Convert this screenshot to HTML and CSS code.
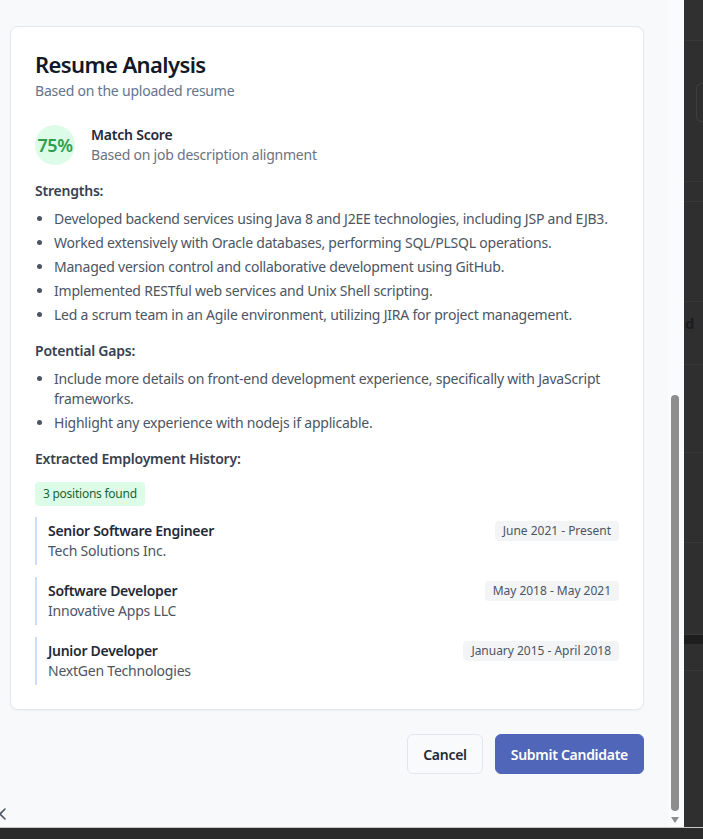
FILE: index.html
```html
<!DOCTYPE html>
<html lang="en">
<head>
<meta charset="utf-8">
<title>Resume Analysis</title>
<link rel="stylesheet" href="styles.css">
</head>
<body>
<div class="screen">
  <div class="panel">
    <div class="scroll">
      <div class="card">
        <div class="card-header">
          <h1 class="title">Resume Analysis</h1>
          <p class="subtitle">Based on the uploaded resume</p>
        </div>
        <div class="card-content">
          <div class="score-row">
            <div class="score-circle">75%</div>
            <div class="score-text">
              <div class="score-title">Match Score</div>
              <div class="score-sub">Based on job description alignment</div>
            </div>
          </div>

          <h3 class="section-label">Strengths:</h3>
          <ul class="list">
            <li>Developed backend services using Java 8 and J2EE technologies, including JSP and EJB3.</li>
            <li>Worked extensively with Oracle databases, performing SQL/PLSQL operations.</li>
            <li>Managed version control and collaborative development using GitHub.</li>
            <li>Implemented RESTful web services and Unix Shell scripting.</li>
            <li>Led a scrum team in an Agile environment, utilizing JIRA for project management.</li>
          </ul>

          <h3 class="section-label">Potential Gaps:</h3>
          <ul class="list">
            <li>Include more details on front-end development experience, specifically with JavaScript frameworks.</li>
            <li>Highlight any experience with nodejs if applicable.</li>
          </ul>

          <h3 class="section-label">Extracted Employment History:</h3>
          <div class="badge-row"><span class="badge">3 positions found</span></div>
          <div class="jobs">
            <div class="job">
              <div class="job-info">
                <div class="job-title">Senior Software Engineer</div>
                <div class="job-company">Tech Solutions Inc.</div>
              </div>
              <span class="job-date">June 2021 - Present</span>
            </div>
            <div class="job">
              <div class="job-info">
                <div class="job-title">Software Developer</div>
                <div class="job-company">Innovative Apps LLC</div>
              </div>
              <span class="job-date">May 2018 - May 2021</span>
            </div>
            <div class="job">
              <div class="job-info">
                <div class="job-title">Junior Developer</div>
                <div class="job-company">NextGen Technologies</div>
              </div>
              <span class="job-date">January 2015 - April 2018</span>
            </div>
          </div>
        </div>
      </div>

      <div class="actions">
        <button class="btn btn-outline">Cancel</button>
        <button class="btn btn-primary">Submit Candidate</button>
      </div>

      <div class="close-row">
        <svg class="close-icon" width="14" height="14" viewBox="0 0 14 14" aria-hidden="true">
          <path d="M2 2 L12 12 M12 2 L2 12" stroke="#4b5563" stroke-width="1.6" stroke-linecap="round" fill="none"/>
        </svg>
      </div>
    </div>
    <div class="scrollbar">
      <div class="thumb"></div>
      <div class="arrow"></div>
    </div>
  </div>
  <div class="backdrop">
    <div class="bd-row bd-top"></div>
    <div class="bd-row bd-input"><div class="bd-field"></div></div>
    <div class="bd-row bd-a"></div>
    <div class="bd-row bd-b"></div>
    <div class="bd-row bd-c"><span class="bd-letter">d</span></div>
    <div class="bd-row bd-d"></div>
    <div class="bd-row bd-e"></div>
    <div class="bd-row bd-g"></div>
    <div class="bd-row bd-band"></div>
    <div class="bd-row bd-f"></div>
  </div>
</div>
<div class="bottom-bar"></div>
</body>
</html>
```

FILE: styles.css
```css
* { box-sizing: border-box; }

html, body {
  margin: 0;
  padding: 0;
  background: #2b2b2b;
  overflow: hidden;
}

body {
  font-family: "Noto Sans", "Open Sans", "Liberation Sans", sans-serif;
  letter-spacing: -0.22px;
  width: 703px;
  height: 839px;
}

.screen {
  display: flex;
  height: 828px;
  border-bottom: 1px solid #c6c6c6;
}

.panel {
  width: 684px;
  flex: none;
  display: flex;
  background: #f8f9fb;
  overflow: hidden;
}

.scroll {
  width: 668px;
  padding-top: 26px;
}

.card {
  margin-left: 10px;
  width: 634px;
  background: #ffffff;
  border: 1px solid #e3e7ee;
  border-radius: 8px;
  box-shadow: 0 1px 2px rgba(15, 23, 42, 0.04);
}

.card-header {
  padding: 25px 24px 24px;
  display: flex;
  flex-direction: column;
  gap: 5px;
}

.title {
  margin: 0;
  font-size: 22px;
  line-height: 24px;
  font-weight: 600;
  letter-spacing: -0.6px;
  color: #111827;
}

.subtitle {
  margin: 0;
  font-size: 14px;
  line-height: 20px;
  color: #64748b;
}

.card-content {
  padding: 0 24px 24px;
}

.score-row {
  display: flex;
  align-items: center;
  gap: 16px;
}

.score-circle {
  width: 40px;
  height: 40px;
  border-radius: 50%;
  background: #dcfce7;
  color: #2f9e4f;
  display: flex;
  align-items: center;
  justify-content: center;
  font-size: 18px;
  font-weight: 600;
  letter-spacing: -0.4px;
}

.score-title {
  font-size: 14px;
  line-height: 20px;
  font-weight: 600;
  color: #1f2937;
}

.score-sub {
  font-size: 14px;
  line-height: 20px;
  color: #6b7280;
}

.section-label {
  margin: 16px 0 0;
  font-size: 14px;
  line-height: 20px;
  font-weight: 600;
  color: #374151;
}

.list {
  margin: 8px 0 0;
  padding-left: 19px;
  list-style: disc;
  color: #4b5563;
  font-size: 14px;
  line-height: 20px;
}

.list li + li {
  margin-top: 4px;
}

.badge-row {
  margin-top: 13px;
  display: flex;
}

.badge {
  display: inline-block;
  background: #dcfce7;
  color: #166534;
  font-size: 12px;
  line-height: 16px;
  padding: 4px 8px;
  border-radius: 4px;
  letter-spacing: -0.25px;
}

.jobs {
  margin-top: 11px;
  display: flex;
  flex-direction: column;
  gap: 12px;
}

.job {
  display: flex;
  justify-content: space-between;
  align-items: flex-start;
  border-left: 2px solid #c9dcfb;
  padding: 4px 0 4px 11px;
}

.job-title {
  font-size: 14px;
  line-height: 20px;
  font-weight: 600;
  color: #1f2937;
  letter-spacing: -0.28px;
}

.job-company {
  font-size: 14px;
  line-height: 20px;
  color: #4b5563;
}

.job-date {
  background: #f3f4f6;
  color: #4b5563;
  font-size: 12px;
  line-height: 16px;
  padding: 2px 8px;
  border-radius: 4px;
  letter-spacing: -0.02px;
}

.actions {
  margin-top: 24px;
  margin-left: 10px;
  width: 634px;
  display: flex;
  justify-content: flex-end;
  gap: 12px;
}

.btn {
  height: 40px;
  padding: 0 15px;
  border-radius: 6px;
  font-family: inherit;
  font-size: 14px;
  font-weight: 600;
  letter-spacing: -0.28px;
}

.btn-outline {
  background: #f9fafb;
  border: 1px solid #e2e6ee;
  color: #1f2937;
}

.btn-primary {
  background: #5067b9;
  border: 1px solid #5067b9;
  color: #ffffff;
}

.close-row {
  margin-top: 33px;
  height: 14px;
}

.close-icon {
  display: block;
  margin-left: -7px;
}

.scrollbar {
  width: 16px;
  padding-top: 395px;
  display: flex;
  flex-direction: column;
  align-items: center;
  background: #fafbfc;
}

.thumb {
  width: 8px;
  height: 416px;
  background: #8d8d8d;
  border-radius: 4px;
  margin-left: -2px;
}

.arrow {
  margin-top: 6px;
  margin-left: -2px;
  width: 0;
  height: 0;
  border-left: 4px solid transparent;
  border-right: 4px solid transparent;
  border-top: 6px solid #8d8d8d;
}

.backdrop {
  flex: 1;
  background: #2f2f2f;
  display: flex;
  flex-direction: column;
}

.bd-row {
  border-bottom: 1px solid #383838;
}

.bd-top { height: 41px; background: #303030; }
.bd-input { height: 141px; padding-top: 42px; padding-left: 12px; }
.bd-field { height: 39px; border: 1px solid #3d3d3d; border-right: none; border-radius: 6px 0 0 6px; }
.bd-a { height: 20px; }
.bd-b { height: 100px; }
.bd-c { height: 63px; padding-top: 11px; }
.bd-d { height: 88px; }
.bd-e { height: 90px; }
.bd-g { height: 92px; }
.bd-band { height: 9px; background: #1e1e1e; border-bottom: none; }
.bd-f { height: 27px; }

.bd-letter {
  display: block;
  margin-left: 1px;
  font-size: 15px;
  line-height: 20px;
  font-weight: 700;
  color: #1c1c1c;
}

.bottom-bar {
  height: 10px;
  background: #2b2b2b;
}
```
